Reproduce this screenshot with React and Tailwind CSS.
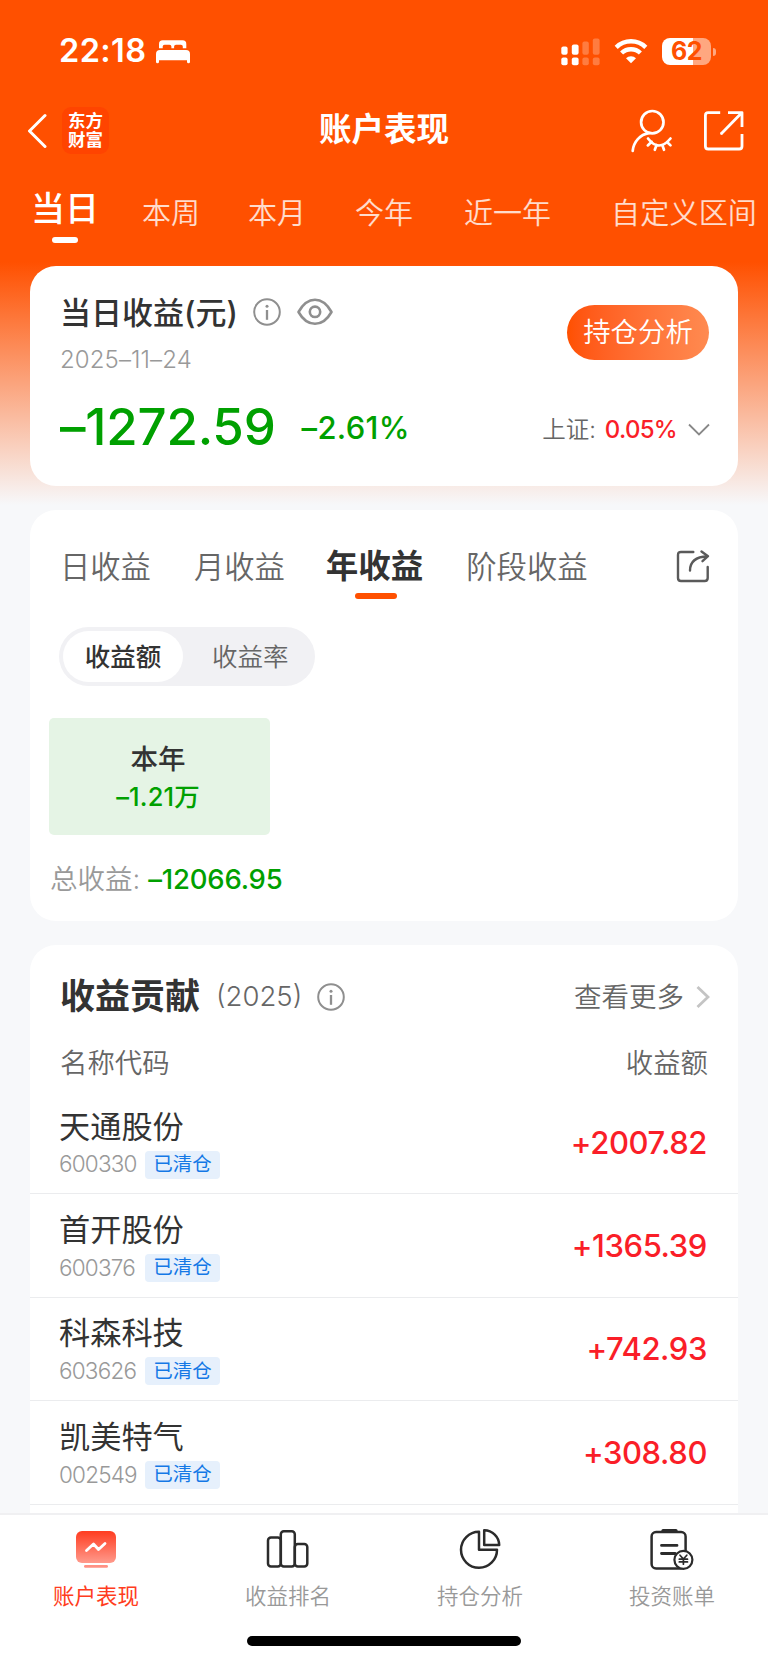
import React from 'react';
import { clsx } from 'clsx';

const holdings = [
  { name: '天通股份', code: '600330', profit: '+2007.82' },
  { name: '首开股份', code: '600376', profit: '+1365.39' },
  { name: '科森科技', code: '603626', profit: '+742.93' },
  { name: '凯美特气', code: '002549', profit: '+308.80' },
];

const BedIcon = () => (
  <svg width="34" height="24" viewBox="0 0 34 24" fill="white">
    <path d="M3 8.3V4Q3 0.3 6.7 0.3H26.6Q30.3 0.3 30.3 4V8.3H26.8V6.6Q26.8 4.7 24.9 4.7H20Q18.1 4.7 18.1 6.6V8.3H15.4V6.6Q15.4 4.7 13.5 4.7H8.6Q6.7 4.7 6.7 6.6V8.3Z" />
    <path d="M4 10H30Q34 10 34 14V21.8Q34 23.3 32.5 23.3T31 21.8V20.3H3V21.8Q3 23.3 1.5 23.3T0 21.8V14Q0 10 4 10Z" />
  </svg>
);

const SignalIcon = () => (
  <svg width="39" height="28" viewBox="0 0 39 28" fill="white">
    <rect x="0.3" y="8.5" width="6.3" height="8.2" rx="2" />
    <rect x="0.3" y="19.6" width="6.3" height="7.7" rx="2" />
    <rect x="10.8" y="6.4" width="6.8" height="10.3" rx="2" />
    <rect x="10.8" y="19.6" width="6.8" height="7.7" rx="2" />
    <g opacity="0.25">
      <rect x="21.4" y="3.4" width="6.4" height="13.3" rx="2" />
      <rect x="21.4" y="19.6" width="6.4" height="7.7" rx="2" />
      <rect x="31.8" y="0.4" width="6.8" height="16.3" rx="2" />
      <rect x="31.8" y="19.6" width="6.8" height="7.7" rx="2" />
    </g>
  </svg>
);

const WifiIcon = () => (
  <svg width="34" height="25" viewBox="0 0 34 25" fill="none" stroke="white" strokeWidth="4.4">
    <path d="M2.2 8.3A21.2 21.2 0 0 1 31.8 8.3" />
    <path d="M7.6 14A13.6 13.6 0 0 1 26.4 14" />
    <path d="M17 24.2L12 19.3A7 7 0 0 1 22 19.3Z" fill="white" stroke="none" />
  </svg>
);

const UserHiddenIcon = () => (
  <svg width="42" height="44" viewBox="0 0 42 44" fill="none" stroke="white" strokeWidth="2.7" strokeLinecap="round" strokeLinejoin="round">
    <circle cx="21.3" cy="13.2" r="11.2" />
    <path d="M1.7 41.8C2.6 33 9 25.500 18 24.200" />
    <path d="M17 29.500Q27.800 43.500 39.500 29.500M20.600 32.800L16.800 36.400M25.600 36L23.800 40.800M31.300 36L33 40.800M36 33L39.500 36.400" />
  </svg>
);

const OpenIcon = () => (
  <svg width="42" height="42" viewBox="0 0 42 42" fill="none" stroke="white" strokeWidth="2.8" strokeLinejoin="round">
    <path d="M17.2 2.6H5.2Q2.4 2.6 2.4 5.4V36.2Q2.4 39 5.2 39H36.2Q39 39 39 36.2V24" />
    <path d="M25 2.6H39V17M38.5 3L18.5 23.5" />
    <path d="M18.5 23.5h0.01" strokeLinecap="round" />
  </svg>
);

const InfoIcon = () => (
  <svg width="28" height="28" viewBox="0 0 28 28" fill="none" stroke="#8f8f8f" strokeWidth="2">
    <circle cx="14" cy="14" r="12.8" />
    <path d="M14 12V21.8" strokeWidth="2.3" />
    <circle cx="14" cy="8.3" r="1.5" fill="#8f8f8f" stroke="none" />
  </svg>
);

const EyeIcon = () => (
  <svg width="36" height="28" viewBox="0 0 36 28" fill="none" stroke="#8f8f8f" strokeWidth="2.6" strokeLinejoin="round">
    <path d="M1.5 14C6 6 11.5 1.8 18 1.8S30 6 34.5 14C30 22 24.5 25.8 18 25.8S6 22 1.5 14Z" />
    <circle cx="18" cy="13.8" r="5.2" />
  </svg>
);

const ShareIcon = () => (
  <svg width="34" height="34" viewBox="0 0 34 34" fill="none" stroke="#5a5a5a" strokeWidth="2.4" strokeLinecap="round" strokeLinejoin="round">
    <path d="M17.3 3H5Q2 3 2 6V29Q2 32 5 32H28.7Q31.7 32 31.7 29V18" />
    <path d="M14 21.5C14 13 19 7.8 31.5 7.2M25.5 2.5L32 7.2L26.5 12.2" />
  </svg>
);

const PerformanceIcon = () => (
  <svg width="44" height="44" viewBox="0 0 44 44" fill="none">
    <defs>
      <linearGradient id="screen" x1="0" y1="0" x2="0" y2="1">
        <stop offset="0" stopColor="#ff3c20" />
        <stop offset="1" stopColor="#ff9a8c" />
      </linearGradient>
    </defs>
    <rect x="2" y="3" width="40" height="32" rx="6" fill="url(#screen)" />
    <rect x="10" y="37" width="24" height="2.8" rx="1.4" fill="#ff9184" />
    <path d="M12.5 22.5L19.5 16L24.5 21.5L31 15.5" stroke="white" strokeWidth="2.8" strokeLinecap="round" strokeLinejoin="round" />
  </svg>
);

const RankIcon = () => (
  <svg width="44" height="44" viewBox="0 0 44 44" fill="none" stroke="#2b2b2b" strokeWidth="2.5">
    <rect x="2" y="9.6" width="12.8" height="29" rx="3" />
    <rect x="14.8" y="3.2" width="14" height="35.4" rx="3" />
    <rect x="28.8" y="16" width="12.5" height="22.6" rx="3" />
  </svg>
);

const PieIcon = () => (
  <svg width="44" height="44" viewBox="0 0 44 44" fill="none" stroke="#2b2b2b" strokeWidth="2.5" strokeLinejoin="round">
    <path d="M21 3.8A18 18 0 1 0 39 21.7H21Z" />
    <path d="M26.2 2.2V17H41.2A15 15 0 0 0 26.2 2.2Z" />
  </svg>
);

const BillIcon = () => (
  <svg width="44" height="44" viewBox="0 0 44 44" fill="none" stroke="#2b2b2b" strokeWidth="2.5" strokeLinecap="round" strokeLinejoin="round">
    <rect x="1.6" y="4" width="34" height="36.5" rx="4.5" />
    <path d="M13 2.5H26" strokeWidth="3.2" />
    <path d="M11.5 17.4H27M11.5 25.5H25" strokeWidth="2.8" />
    <circle cx="33.4" cy="31.8" r="9" fill="white" strokeWidth="2.2" />
    <path d="M30 27.2L33.4 31L36.8 27.2M33.4 31V36.2M29.3 31.2H37.5M29.3 33.9H37.5" strokeWidth="1.7" />
  </svg>
);

const StatusBar = () => (
  <div className="flex h-[103px] items-center pl-[59px] pr-[52px] text-white">
    <span className="w-[97px] text-[32.5px] leading-none font-semibold tracking-[0.4px]">22:18</span>
    <BedIcon />
    <div className="ml-auto flex items-center">
      <SignalIcon />
      <div className="ml-[14px] mr-[14px]"><WifiIcon /></div>
      <div className="flex h-[27px] w-[49px] items-center justify-center rounded-[8px] bg-[linear-gradient(90deg,#fff_31px,#ffa780_31px)] text-[25px] leading-none font-bold tracking-[-0.5px] text-[#ff5000]">
        62
      </div>
      <div className="ml-[2px] h-[8px] w-[3px] rounded-r-full bg-[#ffa780]" />
    </div>
  </div>
);

const NavBar = () => (
  <div className="grid h-[54px] grid-cols-[1fr_auto_1fr] items-center pl-[27px] pr-[23px] text-white">
    <div className="flex items-center">
      <svg width="20" height="36" viewBox="0 0 20 36" fill="none" stroke="white" strokeWidth="3" strokeLinecap="round" strokeLinejoin="round">
        <path d="M18 3.5L2.5 19L18 34.5" />
      </svg>
      <div className="ml-[15px] flex h-[47px] w-[47px] flex-col items-center justify-center rounded-[9px] bg-[#ff4400] text-[17.5px] leading-[19px] font-bold">
        <span>东方</span>
        <span>财富</span>
      </div>
    </div>
    <h1 className="-ml-[4px] text-[32.5px] leading-none font-bold">账户表现</h1>
    <div className="flex items-center justify-end pt-[1px]">
      <UserHiddenIcon />
      <div className="ml-[30px]"><OpenIcon /></div>
    </div>
  </div>
);

const PeriodTabs = () => (
  <div className="flex h-[109px] items-start pl-[31px] pt-[37px] text-[29px] leading-[40px] font-[350] whitespace-nowrap text-white/80">
    <div className="-mt-[5px] flex w-[68px] flex-col items-center text-[34px] font-medium text-white">
      当日
      <div className="mt-[8px] h-[6px] w-[26px] rounded-full bg-white" />
    </div>
    <span className="ml-[43px]">本周</span>
    <span className="ml-[48px]">本月</span>
    <span className="ml-[49px]">今年</span>
    <span className="ml-[51px]">近一年</span>
    <span className="ml-[60px] tracking-[0.2px]">自定义区间</span>
  </div>
);

const TodayCard = () => (
  <section className="mx-[30px] h-[220px] rounded-[26px] bg-white pl-[30px] pr-[29px]">
    <div className="flex h-[112px] justify-between">
      <div className="pt-[28px]">
        <div className="flex h-[36px] items-center">
          <h2 className="w-[193px] text-[31px] leading-none font-medium whitespace-nowrap text-[#333]">当日收益(元)</h2>
          <InfoIcon />
          <div className="ml-[16px]"><EyeIcon /></div>
        </div>
        <p className="mt-[15px] text-[24px] leading-[30px] font-[350] tracking-[0.1px] text-[#999]">2025–11–24</p>
      </div>
      <button className="mt-[39px] h-[55px] w-[142px] rounded-full bg-linear-to-r from-[#ff5000] to-[#ff8a50] pt-[1px] text-[27.4px] leading-none font-[350] text-white">
        持仓分析
      </button>
    </div>
    <div className="mt-[18px] flex h-[60px] items-center">
      <span className="text-[51px] leading-none font-[450] tracking-[-0.2px] text-[#00a000]">–1272.59</span>
      <span className="ml-[26px] pt-[3px] text-[31px] leading-none font-[450] tracking-[0.3px] text-[#00a000]">–2.61%</span>
      <div className="-mr-[1px] ml-auto flex items-center pt-[7px] text-[24px] leading-none">
        <span className="text-[23.5px] font-[350] text-[#666]">上证:</span>
        <span className="ml-[9px] font-medium tracking-[-0.7px] text-[#fa1e28]">0.05%</span>
        <svg className="ml-[11px]" width="22" height="14" viewBox="0 0 22 14" fill="none" stroke="#888" strokeWidth="1.8">
          <path d="M1 1.5L11 11.5L21 1.5" />
        </svg>
      </div>
    </div>
  </section>
);

const YearCard = () => (
  <section className="mx-[30px] mt-[24px] h-[411px] rounded-[26px] bg-white">
    <div className="flex h-[90px] items-start pl-[30px] pr-[28px] pt-[37px] text-[30.3px] leading-[40px] font-[350] text-[#666]">
      <span>日收益</span>
      <span className="ml-[43px]">月收益</span>
      <div className="ml-[41px] flex flex-col items-center text-[32.5px] font-bold text-[#333]">
        年收益
        <div className="ml-[2px] mt-[6px] h-[6px] w-[42px] rounded-full bg-[#ff5000]" />
      </div>
      <span className="ml-[43px]">阶段收益</span>
      <div className="ml-auto pt-[2px]"><ShareIcon /></div>
    </div>
    <div className="ml-[29px] mt-[27px] flex h-[59px] w-[256px] items-center rounded-full bg-[#f1f1f4] pl-[4px] text-[25.5px] leading-none">
      <span className="flex h-[51px] w-[120px] items-center justify-center rounded-full bg-white font-medium text-[#333]">收益额</span>
      <span className="flex-1 pl-[29px] font-[350] text-[#666]">收益率</span>
    </div>
    <div className="ml-[19px] mt-[32px] flex h-[117px] w-[221px] flex-col items-center justify-center rounded-[5px] bg-[#e5f4e5] pr-[3px] pt-[2px] text-[25.5px] leading-[38px] font-medium">
      <span className="text-[27.5px] text-[#333]">本年</span>
      <span className="tracking-[0.1px] text-[#00a000]">–1.21万</span>
    </div>
    <div className="ml-[20px] mt-[24px] flex items-center text-[27.5px] leading-[40px]">
      <span className="font-[350] text-[#999]">总收益:</span>
      <span className="ml-[8px] font-medium tracking-[-0.2px] text-[#00a000]">–12066.95</span>
    </div>
  </section>
);

const ContributionCard = () => (
  <section className="mx-[30px] mt-[24px] flex-1 rounded-t-[26px] bg-white">
    <div className="flex h-[103px] items-center pl-[30px] pr-[28px] text-[27.5px] leading-none text-[#666]">
      <h2 className="text-[35px] font-bold text-[#333]">收益贡献</h2>
      <span className="ml-[16px] w-[101px] font-[350]">(2025)</span>
      <InfoIcon />
      <span className="ml-auto pt-[2px] font-[350]">查看更多</span>
      <svg className="ml-[12px]" width="14" height="24" viewBox="0 0 14 24" fill="none" stroke="#c4c4c4" strokeWidth="2.8">
        <path d="M1.5 2L12 12L1.5 22" />
      </svg>
    </div>
    <div className="flex h-[43px] items-start justify-between px-[30px] text-[27.4px] leading-[30px] font-[350] text-[#666]">
      <span>名称代码</span>
      <span>收益额</span>
    </div>
    {holdings.map((item) => (
      <div key={item.code} className="flex h-[103.4px] items-center justify-between border-b border-[#ebecee] pl-[29px] pr-[31px]">
        <div className="pt-[1px]">
          <div className="text-[31.2px] leading-[40px] text-[#333]">{item.name}</div>
          <div className="mt-[4px] flex h-[28px] items-center">
            <span className="w-[86px] text-[22.5px] leading-none font-[350] tracking-[-0.8px] text-[#999]">{item.code}</span>
            <span className="flex h-[28px] w-[75px] items-center justify-center rounded-[4px] bg-[#e6f0fc] text-[19.5px] leading-none text-[#1478e6]">已清仓</span>
          </div>
        </div>
        <span className="text-[31px] leading-none font-medium tracking-[-0.4px] text-[#fa1e28]">{item.profit}</span>
      </div>
    ))}
  </section>
);

const tabs = [
  { label: '账户表现', icon: PerformanceIcon, active: true },
  { label: '收益排名', icon: RankIcon },
  { label: '持仓分析', icon: PieIcon },
  { label: '投资账单', icon: BillIcon },
];

const TabBar = () => (
  <nav className="h-[150px] shrink-0 border-t-2 border-[#f0f0f2] bg-white">
    <div className="grid h-[121px] grid-cols-4 pt-[13px]">
      {tabs.map(({ label, icon: Icon, active }) => (
        <div key={label} className={clsx('flex flex-col items-center text-[21.5px] leading-[30px]', active ? 'text-[#ff3c20]' : 'font-[350] text-[#999]')}>
          <Icon />
          <span className="mt-[9px]">{label}</span>
        </div>
      ))}
    </div>
    <div className="mx-auto h-[10px] w-[274px] rounded-full bg-black" />
  </nav>
);

export default function App() {
  return (
    <div className="flex h-[1663px] w-[768px] flex-col overflow-hidden bg-[#f7f8fa] bg-[linear-gradient(180deg,#ff5000_262px,#f7f8fa_505px)] font-['Inter','Noto_Sans_CJK_SC',sans-serif]">
      <StatusBar />
      <NavBar />
      <PeriodTabs />
      <TodayCard />
      <YearCard />
      <div className="flex min-h-0 flex-1 flex-col overflow-hidden">
        <ContributionCard />
      </div>
      <TabBar />
    </div>
  );
}
